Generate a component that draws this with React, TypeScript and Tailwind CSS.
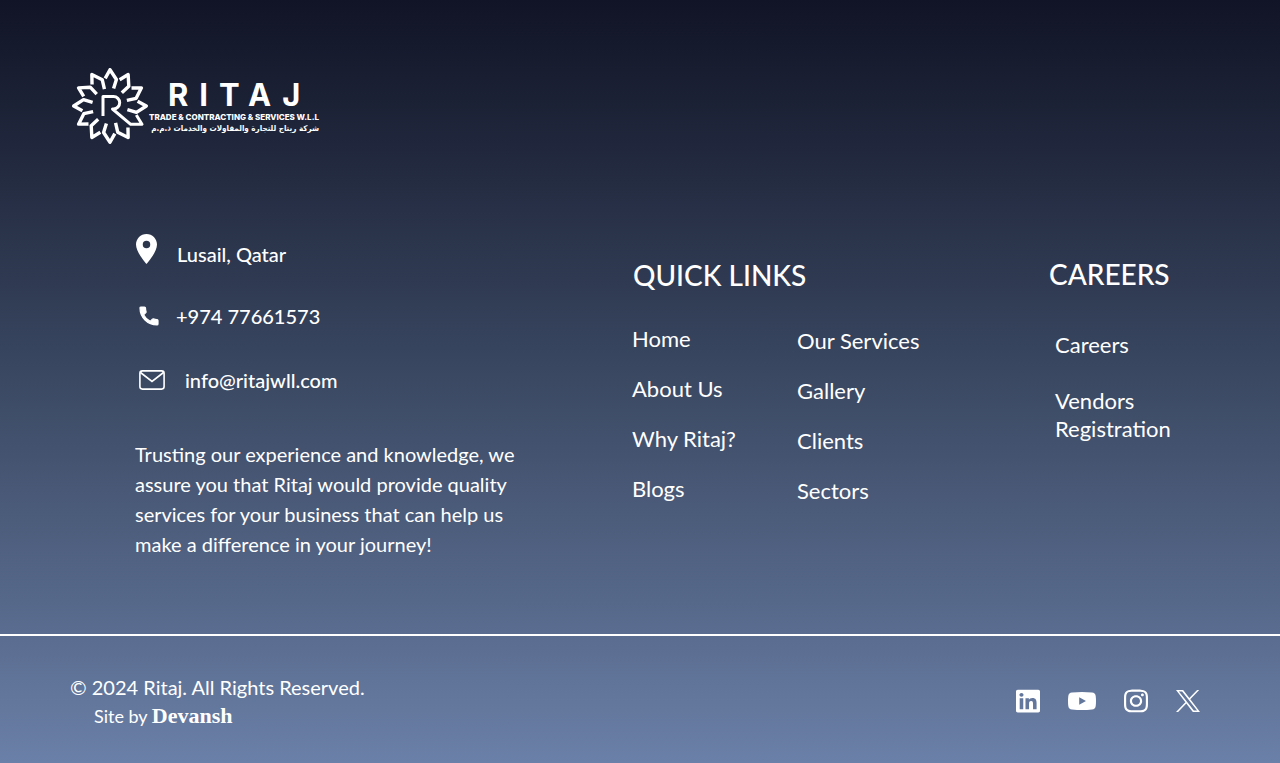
import { FaInstagram, FaLinkedin } from "react-icons/fa";

const primaryLinks = ["Home", "About Us", "Why Ritaj?", "Blogs"];
const secondaryLinks = ["Our Services", "Gallery", "Clients", "Sectors"];

function Emblem() {
  return (
    <svg viewBox="-38 -38 76 76" className="h-[76px] w-[76px] shrink-0" fill="none" stroke="currentColor" strokeWidth="3.4" strokeLinejoin="round" aria-hidden="true">
      {[0, 30, 60, 90, 150, 180, 210, 240, 270, 300, 330].map((a) => (
        <path key={a} transform={`rotate(${a})`} d="M-4.8-27.6 0-36.3 6.4-26.5 3.6-17.4" />
      ))}
      {/* The letter's leg runs into the petal at its foot. */}
      <path d="M26.3 9 32 18.3H20.7L2.5 3H3.5a6.2 6.2 0 0 0 0-12.4H-7V10" strokeWidth="3" />
    </svg>
  );
}

function Logo() {
  return (
    <a href="#home" aria-label="Ritaj" className="flex w-fit items-start">
      <Emblem />
      <span className="flex flex-col pt-[9px] font-['Inter'] font-bold">
        <span className="pl-5 text-[31px] leading-9 tracking-[11px]">RITAJ</span>
        <span className="pl-px text-[8px] leading-[9px] font-extrabold whitespace-nowrap">TRADE &amp; CONTRACTING &amp; SERVICES W.L.L</span>
        <span dir="rtl" lang="ar" className="font-['DejaVu_Sans_Condensed','DejaVu_Sans'] text-[8px] leading-[14px] whitespace-nowrap">
          شركة ريتاج للتجارة والمقاولات والخدمات ذ.م.م
        </span>
      </span>
    </a>
  );
}

function LinkList({ items }: { items: string[] }) {
  return (
    <ul className="flex flex-col gap-[22px] text-[22px] leading-7">
      {items.map((item) => (
        <li key={item}>
          <a href="#">{item}</a>
        </li>
      ))}
    </ul>
  );
}

export default function App() {
  return (
    <footer className="bg-linear-to-b from-[#111426] via-[#3b4963] to-[#6b80a8] font-['Lato',sans-serif] text-white">
      <div className="px-[72px] pt-[68px]">
        <Logo />
      </div>

      <div className="flex items-start pt-[88px] pr-20 pb-[75px] pl-[135px]">
        <div className="w-[390px] shrink-0">
          <address className="flex flex-col text-xl leading-7 font-medium not-italic">
            <p className="flex h-[52px] items-start">
              <svg viewBox="5 2 14 20" className="mt-0.5 ml-px h-[30px] w-[21px]" fill="currentColor" aria-hidden="true">
                <path d="M12 2C8.13 2 5 5.13 5 9c0 5.25 7 13 7 13s7-7.75 7-13c0-3.87-3.13-7-7-7zm0 9.5a2.5 2.5 0 1 1 0-5 2.5 2.5 0 0 1 0 5z" />
              </svg>
              <span className="pt-2 pl-5">Lusail, Qatar</span>
            </p>
            <a href="tel:+97477661573" className="flex h-16 items-center">
              <svg viewBox="0 0 24 24" className="ml-0.5 size-6" fill="currentColor" stroke="currentColor" strokeWidth="1.2" strokeLinejoin="round" aria-hidden="true">
                <path d="M6.620 10.790c1.440 2.830 3.760 5.140 6.590 6.590l2.200-2.200c.270-.270.670-.360 1.020-.240 1.120.370 2.330.570 3.570.570.550 0 1 .450 1 1V20c0 .550-.450 1-1 1-9.390 0-17-7.610-17-17 0-.550.450-1 1-1h3.500c.550 0 1 .450 1 1 0 1.250.200 2.450.570 3.570.110.350.030.740-.250 1.020l-2.200 2.200z" />
              </svg>
              <span className="pl-[15px]">+974 77661573</span>
            </a>
            <a href="mailto:info@ritajwll.com" className="flex h-16 items-center">
              <svg viewBox="0 0 26 20" className="ml-1 h-5 w-[26px]" fill="none" stroke="currentColor" strokeWidth="1.6" aria-hidden="true">
                <rect x="0.9" y="0.9" width="24.2" height="18.2" rx="2.5" />
                <path d="M1.500 2.500 13 11.500 24.500 2.500" />
              </svg>
              <span className="pl-5">info@ritajwll.com</span>
            </a>
          </address>
          <p className="pt-[27px] text-xl leading-[30px]">
            Trusting our experience and knowledge, we assure you that Ritaj would provide quality services for your business that can help us make a difference in your journey!
          </p>
        </div>

        <nav aria-label="Quick links" className="ml-[107px] pt-[23px]">
          <h2 className="pl-px text-[28px] leading-10 font-medium">QUICK LINKS</h2>
          <div className="flex pt-[30px]">
            <div className="w-[165px]">
              <LinkList items={primaryLinks} />
            </div>
            <div className="pt-0.5">
              <LinkList items={secondaryLinks} />
            </div>
          </div>
        </nav>

        <nav aria-label="Careers" className="ml-auto w-[151px] pt-[22px]">
          <h2 className="text-[28px] leading-10 font-medium">CAREERS</h2>
          <ul className="flex flex-col gap-7 pt-[37px] pl-1.5 text-[22px] leading-7">
            <li><a href="#">Careers</a></li>
            <li><a href="#">Vendors Registration</a></li>
          </ul>
        </nav>
      </div>

      <div className="flex items-start justify-between border-t-2 border-white pt-[37px] pr-20 pb-8 pl-[70px]">
        <div>
          <p className="text-xl leading-7">© 2024 Ritaj. All Rights Reserved.</p>
          <p className="pl-6 text-lg leading-[30px]">
            Site by <a href="#" className="font-['Liberation_Serif'] text-[22px] leading-none font-bold">Devansh</a>
          </p>
        </div>
        <div className="flex items-center gap-7 pt-[15px]">
          <a href="#" aria-label="LinkedIn"><FaLinkedin preserveAspectRatio="none" className="h-[26px] w-6" /></a>
          <a href="#" aria-label="YouTube">
            <svg viewBox="0 0 28 18" className="h-[18px] w-7" fill="currentColor" fillRule="evenodd" aria-hidden="true">
              <path d="M4 .5Q14-.5 24 .5 27.300 .8 27.700 4 28.300 9 27.700 14 27.300 17.200 24 17.500 14 18.500 4 17.500 .7 17.200 .3 14-.3 9 .3 4 .7 .8 4 .5ZM11.200 5.200V12.800L18 9Z" />
            </svg>
          </a>
          <a href="#" aria-label="Instagram"><FaInstagram preserveAspectRatio="none" className="h-[26px] w-6" /></a>
          <a href="#" aria-label="X">
            <svg viewBox="0 0 1200 1227" preserveAspectRatio="none" className="h-[22px] w-6" fill="currentColor" aria-hidden="true">
              <path d="M714.163 519.284L1160.890 0H1055.030L667.137 450.887L357.328 0H0L468.492 681.821L0 1226.370H105.866L515.491 750.218L842.672 1226.370H1200L714.137 519.284H714.163ZM569.165 687.828L521.697 619.934L144.011 79.694H306.615L611.412 515.685L658.880 583.579L1055.080 1150.300H892.476L569.165 687.854V687.828Z" />
            </svg>
          </a>
        </div>
      </div>
    </footer>
  );
}
